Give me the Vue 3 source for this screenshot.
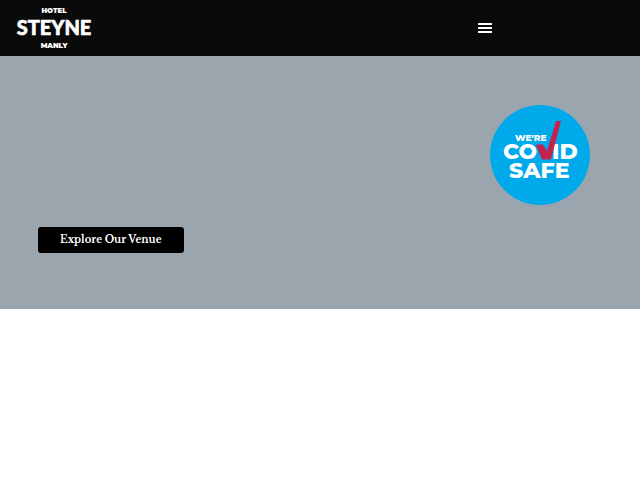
<script setup>
import { ref } from 'vue';

const menuOpen = ref(false);
const bars = [0, 4, 8];
</script>

<template>
  <div class="page">
    <header class="site-header">
      <a href="#" class="logo" aria-label="Hotel Steyne Manly">
        <svg width="76" height="44" viewBox="0 0 76 44">
          <text class="logo-small" x="38" y="7">HOTEL</text>
          <text class="logo-name" x="38" y="29">STEYNE</text>
          <text class="logo-small" x="38" y="42">MANLY</text>
        </svg>
      </a>
      <nav class="site-nav">
        <button
          type="button"
          class="menu-toggle"
          aria-label="Menu"
          :aria-expanded="menuOpen"
          @click="menuOpen = !menuOpen"
        >
          <svg width="14" height="10" viewBox="0 0 14 10">
            <rect v-for="y in bars" :key="y" x="0" :y="y" width="14" height="2" rx="0.5" />
          </svg>
        </button>
      </nav>
    </header>

    <main class="hero">
      <svg class="covid-badge" width="100" height="100" viewBox="0 0 100 100" role="img" aria-label="We're COVID Safe">
        <circle cx="50" cy="50" r="50" fill="#00aaea" />
        <text class="badge-small" x="25" y="36">WE'RE</text>
        <text class="badge-text" x="13" y="54">CO</text>
        <text class="badge-text" x="62" y="54">ID</text>
        <text class="badge-text" x="19" y="73">SAFE</text>
        <path d="M46 39.500H53L57 46L66 16H71L61 54.500H52Z" fill="#c3234e" />
      </svg>
      <a href="#venue" class="explore-btn">Explore Our Venue</a>
    </main>
  </div>
</template>

<style>
body {
  margin: 0;
  background: #fff;
}
</style>

<style scoped>
.site-header {
  display: grid;
  grid-template-columns: 1fr 1fr;
  gap: 2px;
  align-items: center;
  padding: 6px 0 6px 16px;
  background: #0a0a0a;
}

.logo {
  display: block;
  justify-self: start;
  height: 44px;
}

.logo text {
  fill: #fff;
  text-anchor: middle;
}

.logo-small {
  font-family: 'Montserrat', 'Lato', sans-serif;
  font-size: 7px;
  font-weight: 900;
}

.logo-name {
  font-family: 'Lato', sans-serif;
  font-size: 20px;
  font-weight: 900;
  stroke: #fff;
  stroke-width: 0.6;
}

.site-nav {
  display: flex;
  justify-content: center;
}

.menu-toggle {
  display: flex;
  padding: 6px;
  border: none;
  background: transparent;
  cursor: pointer;
}

.menu-toggle svg {
  fill: #fff;
}

/* Hero */
.hero {
  display: flex;
  flex-direction: column;
  align-items: flex-start;
  gap: 22px;
  padding: 49px 50px 56px 38px;
  background: #9ba5ae;
}

.covid-badge {
  align-self: flex-end;
}

.covid-badge text {
  fill: #fff;
  font-family: 'Montserrat', 'Inter', sans-serif;
  font-weight: 800;
}

.badge-small {
  font-size: 9px;
}

.badge-text {
  font-size: 22px;
}

.explore-btn {
  padding: 5px 22px;
  border-radius: 3px;
  background: #000;
  color: #fff;
  font-family: 'Libre Baskerville', 'Liberation Serif', serif;
  font-size: 10px;
  font-weight: 700;
  line-height: 16px;
  text-decoration: none;
}
</style>
